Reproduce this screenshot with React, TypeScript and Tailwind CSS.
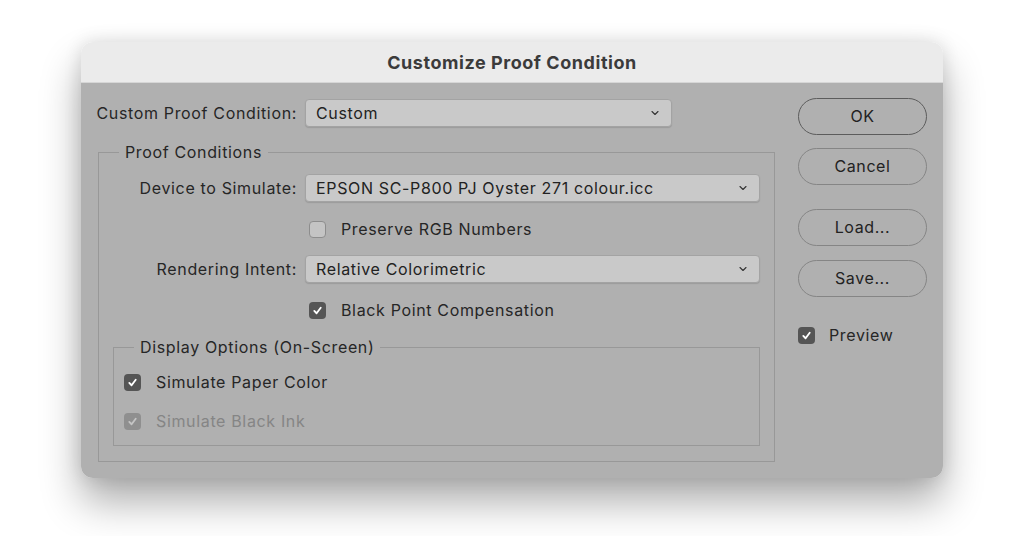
import { ChevronDown } from 'lucide-react'

const Select = ({ value, width }: { value: string; width: string }) => (
  <div className={`${width} h-[28px] flex items-center justify-between pl-[10px] pr-[10px] rounded-[4px] bg-[#c9c9c9] border border-[#a3a3a3] shadow-[0_1px_1px_rgba(0,0,0,0.12)] text-[#222]`}>
    <span>{value}</span>
    <ChevronDown size={12} strokeWidth={2.2} className="text-[#333]" />
  </div>
)

const Check = ({ checked, disabled }: { checked: boolean; disabled?: boolean }) => (
  <div
    className={`w-[17px] h-[17px] shrink-0 rounded-[4px] flex items-center justify-center ${
      checked
        ? disabled
          ? 'bg-[#8f8f8f]'
          : 'bg-[#555555]'
        : 'bg-[#c4c4c4] border border-[#8d8d8d]'
    }`}
  >
    {checked && (
      <svg width="11" height="11" viewBox="0 0 12 12">
        <path d="M2.5 6.5 L5 9 L9.5 3" fill="none" stroke={disabled ? '#c4c4c4' : '#ffffff'} strokeWidth="2" strokeLinecap="round" strokeLinejoin="round" />
      </svg>
    )}
  </div>
)

const PillButton = ({ label, primary }: { label: string; primary?: boolean }) => (
  <button
    className={`w-[129px] h-[37px] rounded-full flex items-center justify-center text-[#222] tracking-[0.6px] pb-[2px] ${
      primary ? 'border-[1.5px] border-[#5c5c5c]' : 'border border-[#858585]'
    }`}
  >
    {label}
  </button>
)

export default function App() {
  return (
    <div
      className="w-[1024px] h-[536px] bg-white pt-[42px] pl-[81px] overflow-hidden text-[16px] tracking-[0.65px]"
      style={{ fontFamily: 'Inter, "Liberation Sans", sans-serif' }}
    >
      <div className="w-[862px] rounded-[12px] overflow-hidden shadow-[0_24px_40px_rgba(0,0,0,0.32),0_0_18px_rgba(0,0,0,0.12)]">
        {/* title bar */}
        <div className="h-[41px] bg-[#ebebeb] border-b border-[#d6d6d6] flex items-center justify-center pt-[1px]">
          <span className="text-[18px] font-bold text-[#3b3b3b] tracking-[0.55px]">Customize Proof Condition</span>
        </div>

        {/* body */}
        <div className="bg-[#b0b0b0] flex pl-[15px] pr-[16px] pt-[16px] pb-[16px] text-[#262626]">
          <div className="w-[679px] flex flex-col">
            <div className="flex items-center gap-[8px]">
              <span className="w-[201px] text-right whitespace-nowrap">Custom Proof Condition:</span>
              <Select value="Custom" width="w-[367px]" />
            </div>

            <fieldset className="mt-[15px] ml-[2px] border border-[#989898] pr-[14px] pb-[15px]">
              <legend className="ml-[20px] px-[6px] leading-[20px]">Proof Conditions</legend>

              <div className="flex items-center gap-[8px] mt-[12px]">
                <span className="w-[198px] text-right whitespace-nowrap">Device to Simulate:</span>
                <Select value="EPSON SC-P800 PJ Oyster 271 colour.icc" width="w-[455px]" />
              </div>

              <div className="flex items-center gap-[15px] mt-[17px] ml-[210px] h-[20px]">
                <Check checked={false} />
                <span>Preserve RGB Numbers</span>
              </div>

              <div className="flex items-center gap-[8px] mt-[16px]">
                <span className="w-[198px] text-right whitespace-nowrap">Rendering Intent:</span>
                <Select value="Relative Colorimetric" width="w-[455px]" />
              </div>

              <div className="flex items-center gap-[15px] mt-[17px] ml-[210px] h-[20px]">
                <Check checked />
                <span>Black Point Compensation</span>
              </div>

              <fieldset className="mt-[17px] ml-[14px] border border-[#989898] pl-[10px] pb-[14px]">
                <legend className="ml-[10px] px-[6px] leading-[20px]">Display Options (On-Screen)</legend>
                <div className="flex items-center gap-[15px] mt-[15px] h-[20px]">
                  <Check checked />
                  <span>Simulate Paper Color</span>
                </div>
                <div className="flex items-center gap-[15px] mt-[19px] h-[20px]">
                  <Check checked disabled />
                  <span className="text-[#858585]">Simulate Black Ink</span>
                </div>
              </fieldset>
            </fieldset>
          </div>

          <div className="ml-[23px] -mt-[1px] flex flex-col">
            <PillButton label="OK" primary />
            <div className="mt-[13px]">
              <PillButton label="Cancel" />
            </div>
            <div className="mt-[24px]">
              <PillButton label="Load..." />
            </div>
            <div className="mt-[14px]">
              <PillButton label="Save..." />
            </div>
            <div className="flex items-center gap-[14px] mt-[28px] h-[20px]">
              <Check checked />
              <span>Preview</span>
            </div>
          </div>
        </div>
      </div>
    </div>
  )
}
